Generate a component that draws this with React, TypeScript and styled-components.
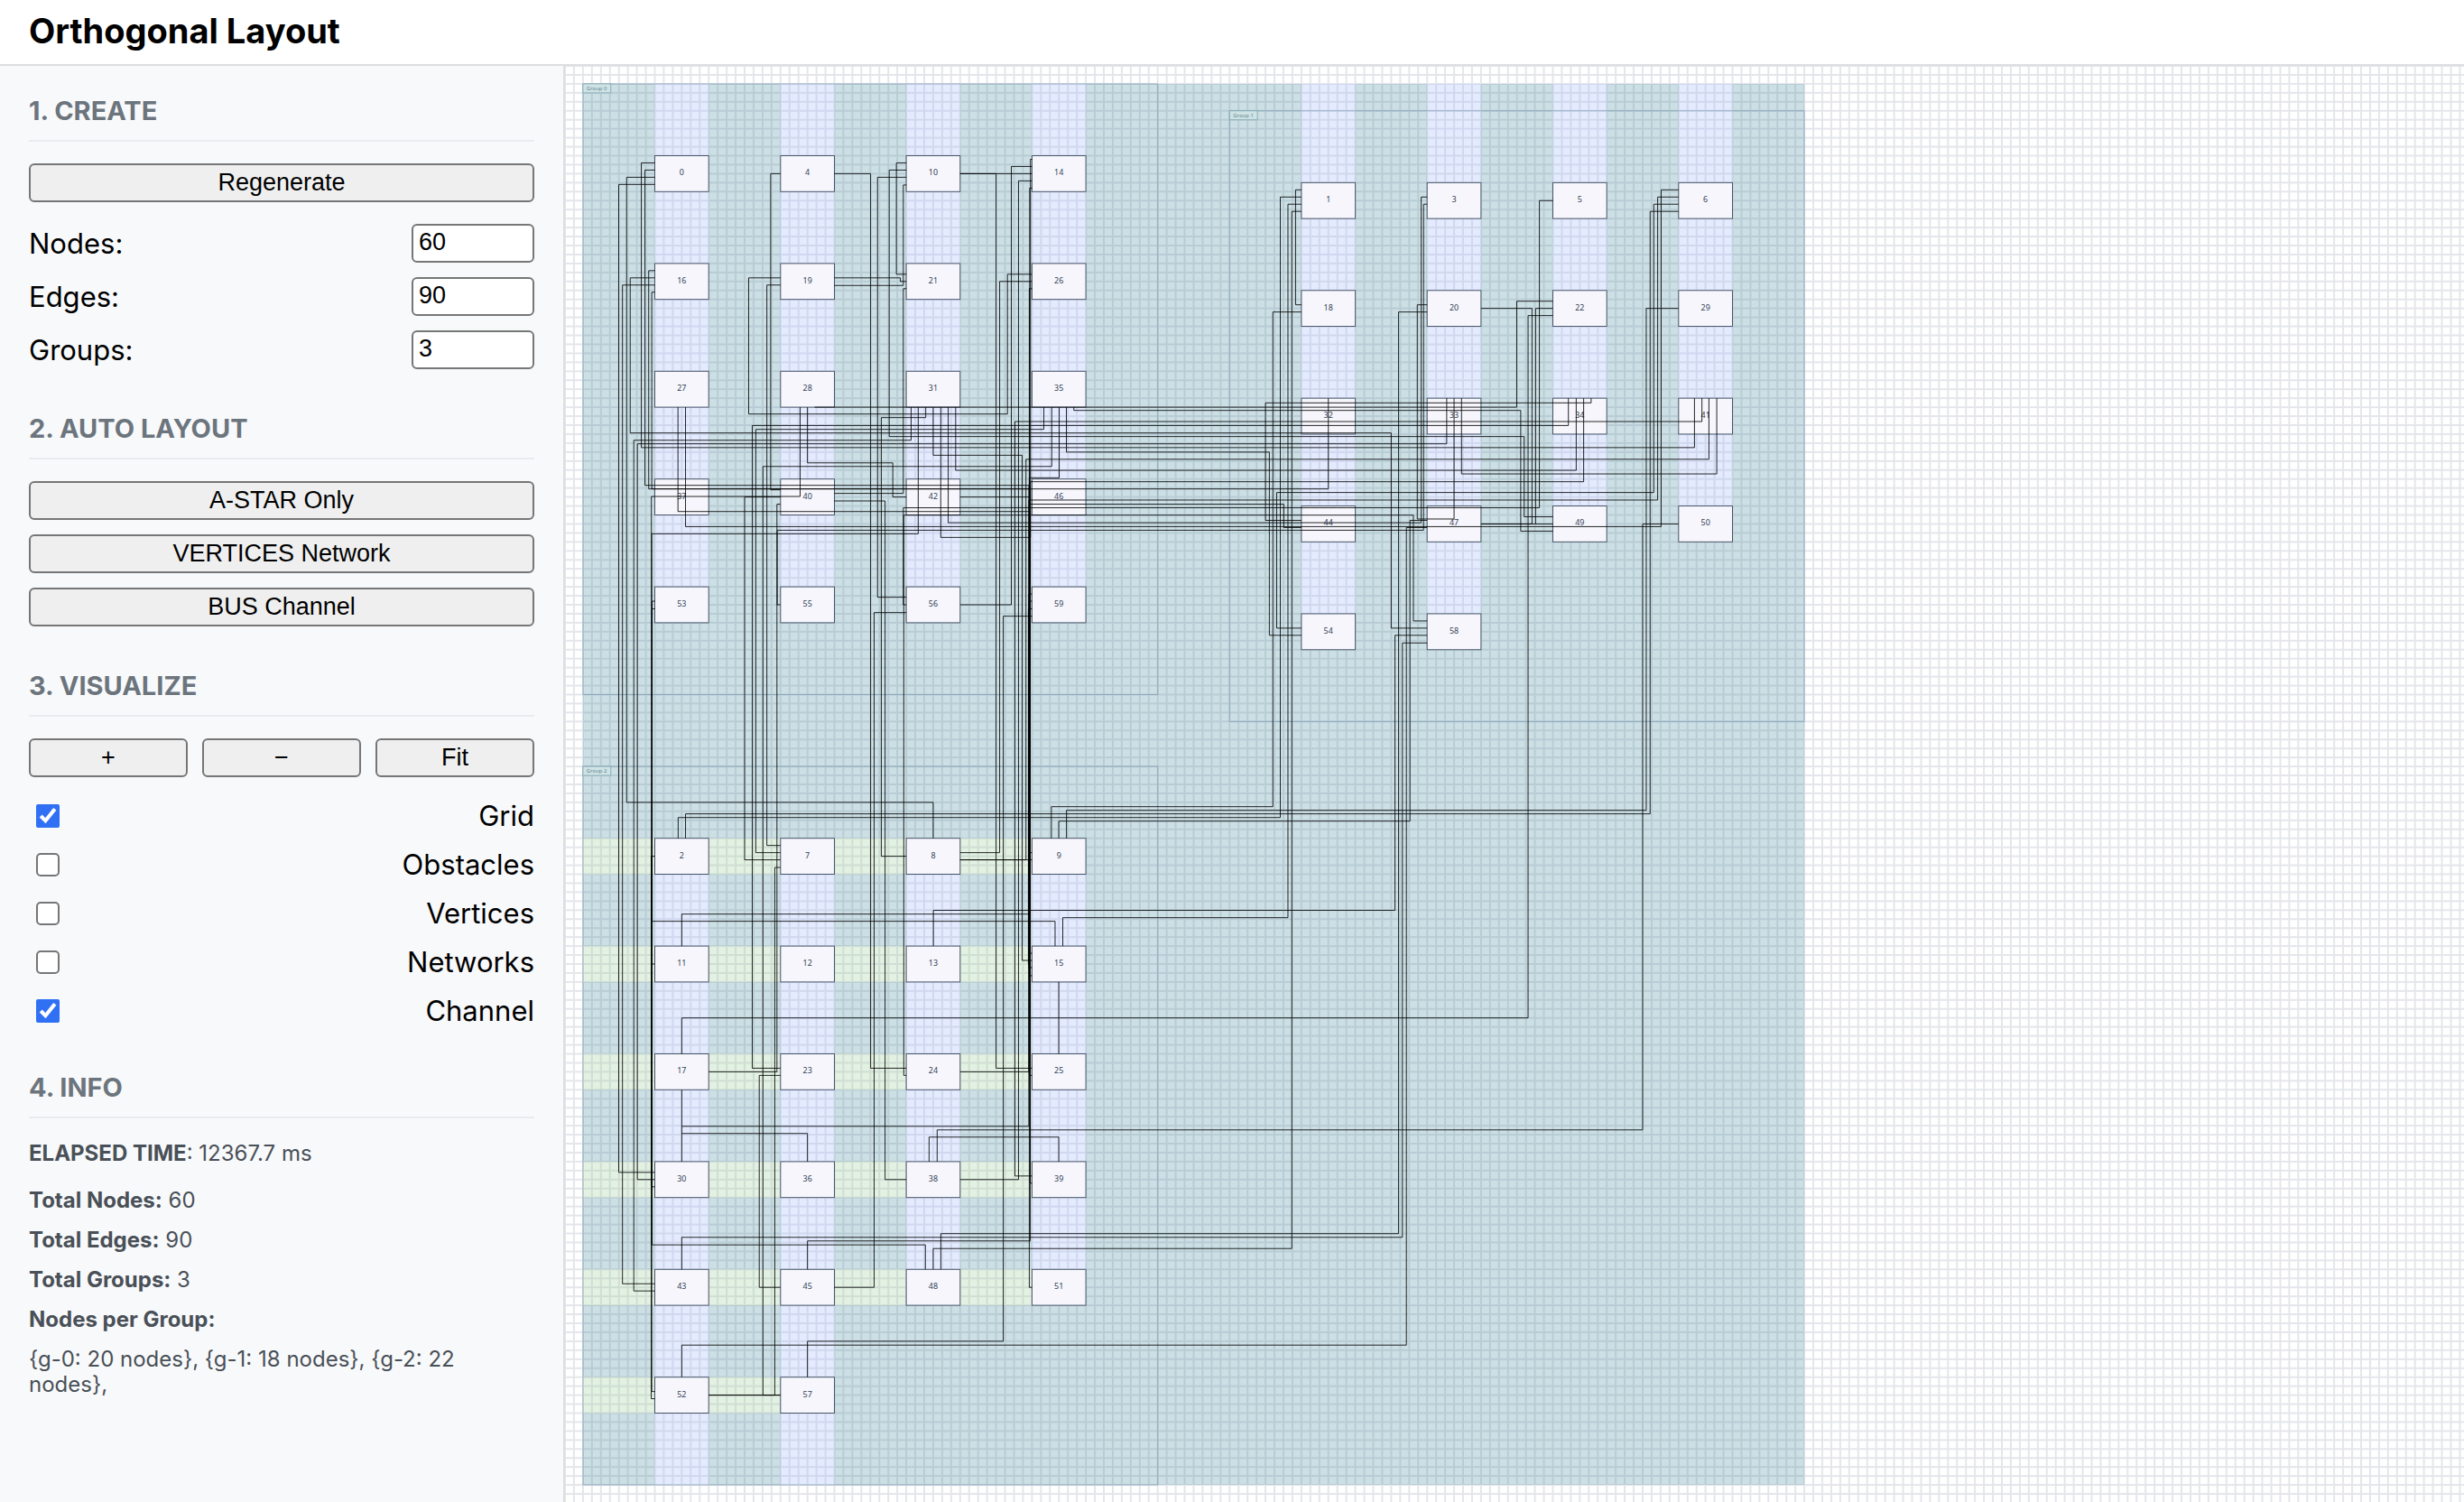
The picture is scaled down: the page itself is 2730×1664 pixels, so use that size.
import React, { useState } from "react";
import styled, { createGlobalStyle } from "styled-components";

const GlobalStyle = createGlobalStyle`
  * { box-sizing: border-box; }
  body { margin: 0; background: #fff; color: #000; font-family: Inter, "Liberation Sans", sans-serif; }
`;

const Page = styled.div`
  display: flex;
  flex-direction: column;
  height: 100vh;
`;

const Header = styled.header`
  flex: none;
  display: flex;
  align-items: center;
  height: 73px;
  padding: 0 32px 4px;
  border-bottom: 2px solid #dcdee0;
`;

const Title = styled.h1`
  margin: 0;
  font-size: 38px;
  line-height: 44px;
  font-weight: 700;
`;

const Body = styled.div`
  flex: 1;
  min-height: 0;
  display: flex;
`;

const Sidebar = styled.aside`
  flex: none;
  display: flex;
  flex-direction: column;
  gap: 47px;
  width: 626px;
  padding: 31px 32px;
  overflow: hidden;
  background: #f8f9fb;
  border-right: 2px solid #dcdee0;
`;

const Section = styled.section`
  display: flex;
  flex-direction: column;
  gap: 24px;
`;

const Heading = styled.h2`
  margin: 0;
  padding-bottom: 13px;
  border-bottom: 2px solid #e9ecef;
  color: #6c757d;
  font-size: 29px;
  line-height: 38px;
  font-weight: 700;
`;

const Stack = styled.div`
  display: flex;
  flex-direction: column;
  gap: 16px;
`;

const ButtonRow = styled.div`
  display: grid;
  grid-template-columns: repeat(3, 1fr);
  gap: 16px;
`;

const Button = styled.button`
  height: 43px;
  padding: 0 12px 2px;
  border: 2px solid #767676;
  border-radius: 6px;
  background: #efefef;
  color: #000;
  font: 27px/32px "Liberation Sans", Arial, sans-serif;
`;

const Field = styled.div`
  display: flex;
  align-items: center;
  justify-content: space-between;
  height: ${(p: { $tall?: boolean }) => (p.$tall ? "43px" : "38px")};
  font-size: 31px;
  line-height: 40px;
`;

const NumberInput = styled.input`
  width: 136px;
  height: 43px;
  padding: 0 6px 2px;
  border: 2px solid #767676;
  border-radius: 6px;
  background: #fff;
  color: #000;
  font: 27px/32px "Liberation Sans", Arial, sans-serif;
`;

const Checkbox = styled.input`
  width: 26px;
  height: 26px;
  margin: 0 8px;
  accent-color: #3070f5;

  &:not(:checked) {
    appearance: none;
    border: 2px solid #767676;
    border-radius: 5px;
    background: #fff;
  }
`;

const Info = styled.div`
  display: flex;
  flex-direction: column;
  gap: 24px;
  padding-top: 1px;
  color: #495057;
  font-size: 24px;
  line-height: 28px;
`;

const Line = styled.p`
  margin: 0;
`;

const Canvas = styled.main`
  flex: 1;
  min-width: 0;
  overflow: hidden;
`;

const Diagram = styled.svg`
  display: block;
  width: 100%;
  height: 100%;
  font-family: "Noto Sans", "Open Sans", sans-serif;
`;

const Wire = styled.polyline`
  fill: none;
  stroke: #000;
  stroke-opacity: 0.85;
  stroke-width: 1;
`;

const NodeBox = styled.rect`
  fill: #f6f6fc;
  stroke: #475569;
  stroke-width: 1;
`;

const NodeLabel = styled.text`
  fill: #334155;
  font-size: 9px;
  text-anchor: middle;
`;

const GroupFrame = styled.rect`
  fill: none;
  stroke: #7393ab;
  stroke-opacity: 0.6;
`;

const GroupTag = styled.rect`
  fill: #cfe3e5;
  stroke: #7ba3ae;
  stroke-opacity: 0.8;
`;

const GroupLabel = styled.text`
  fill: #5f8791;
  font-size: 6px;
`;

const WORLD_W = 1360;
const WORLD_H = 1560;
const NODE_W = 60;
const NODE_H = 40;

const groups = [
  { x: 0, y: 0, w: 640, h: 680, ids: [[0, 4, 10, 14], [16, 19, 21, 26], [27, 28, 31, 35], [37, 40, 42, 46], [53, 55, 56, 59]] },
  { x: 720, y: 30, w: 640, h: 680, ids: [[1, 3, 5, 6], [18, 20, 22, 29], [32, 33, 34, 41], [44, 47, 49, 50], [54, 58]] },
  { x: 0, y: 760, w: 640, h: 800, ids: [[2, 7, 8, 9], [11, 12, 13, 15], [17, 23, 24, 25], [30, 36, 38, 39], [43, 45, 48, 51], [52, 57]] },
];

type Box = [number, number, number, number];

const columnChannels: Box[] = [
  [80, 0, 60, 600], [220, 0, 60, 600], [360, 0, 60, 600], [500, 0, 60, 600],
  [800, 0, 60, 630], [940, 0, 60, 630], [1080, 0, 60, 510], [1220, 0, 60, 510],
  [80, 840, 60, 720], [220, 840, 60, 720], [360, 840, 60, 520], [500, 840, 60, 520],
];

const rowChannels: Box[] = [];
[840, 960, 1080, 1200, 1320].forEach((y) => {
  [[0, 80], [140, 80], [280, 80], [420, 80]].forEach(([x, w]) => rowChannels.push([x, y, w, 40]));
});
rowChannels.push([0, 1440, 80, 40], [140, 1440, 80, 40]);

const boxPath = ([x, y, w, h]: Box) => `M${x} ${y}h${w}v${h}h${-w}z`;
const openSpace = [[0, 0, WORLD_W, WORLD_H] as Box, ...columnChannels, ...rowChannels].map(boxPath).join("");

const wires = [
  "80,88 65,88 65,405 1237.7,405 1237.7,350",
  "80,96 69,96 69,447 496.6,447 496.6,984 500,984",
  "80,104 48.6,104 48.6,800 390,800 390,840",
  "80,112 39.8,112 39.8,1212 80,1212",
  "80,208 73.2,208 73.2,451 830,451 830,350",
  "80,216 52.6,216 52.6,388.7 900,388.7 900,606 940,606",
  "80,224 44,224 44,1336 80,1336",
  "80,232 76.6,232 76.6,451 497,451 497,993 500,993",
  "365.4,360 365.4,396.8 56.6,396.8 56.6,1344 80,1344",
  "961.8,350 961.8,400.8 60.6,400.8 60.6,1220 80,1220",
  "241.8,360 241.8,459.4 76.2,459.4 76.2,1228 80,1228",
  "373.3,360 373.3,501 76.6,501 76.6,1456 80,1456",
  "80,576 77,576 77,932.4 525.7,932.4 525.7,960",
  "80,584.5 77,584.5 77,1292.7 381.3,1292.7 381.3,1320",
  "80,860 76,860 76,1464 80,1464",
  "80,980 76,980",
  "105.8,360 105.8,476.2 498,476.2 498,1224 500,1224",
  "114.2,360 114.2,493 1200.6,493 1200.6,118 1220,118",
  "250,360 250,422 345,422 345,460 360,460",
  "258,360 1039.8,360 1039.8,242 1080,242",
  "381.7,360 381.7,371.6 332.2,371.6 332.2,860 360,860",
  "390,360 390,413.5 489,413.5 489,976 500,976",
  "398.4,360 398.4,505 498.3,505 498.3,84 500,84",
  "406.7,360 406.7,488.6 933.4,488.6 933.4,126 940,126",
  "415,360 415,430.3 1106,430.3 1106,350",
  "513.2,360 513.2,384.7 192.5,384.7 192.5,856 220,856",
  "522,360 522,426 200.4,426 200.4,1460 220,1460",
  "530.3,360 530.3,438.6 497,438.6 497,1340 500,1340",
  "538.3,360 538.3,410 764.3,410 764.3,614 800,614",
  "546.6,360 546.6,363.6 1044.2,363.6 1044.2,498 1080,498",
  "1097.3,350 1097.3,380.4 188.5,380.4 188.5,1096 220,1096",
  "140,1100 216,1100 216,468 220,468",
  "220,1104 196.3,1104 196.3,1340 220,1340",
  "220,460 180,460 180,864 220,864",
  "220,224 204.8,224 204.8,848 220,848",
  "220,100 209,100 209,452 220,452",
  "220,216 184.5,216 184.5,367.6 472.7,367.6 472.7,212 500,212",
  "220,580 216.3,580 216.3,497 936,497 936,134 940,134",
  "220,872.5 213.6,872.5 213.6,1460 140,1460 220,1460",
  "280,456 356.7,456 356.7,228 360,228",
  "280,464.4 336.4,464.4 336.4,1220 360,1220",
  "360,88 349,88 349,212 360,212",
  "360,96 341,96 341,392.7 1048,392.7 1048,482 1080,482",
  "360,104 328,104 328,571.6 360,571.6",
  "360,112.6 356.7,112.6 356.7,224.5 280,224.5",
  "280,216 353.4,216 353.4,220 360,220",
  "1080,130 1065,130 1065,472 356.7,472 356.7,580 360,580",
  "940,598 924.7,598 924.7,480.2 357.2,480.2 357.2,1104 360,1104",
  "280,100 320.3,100 320.3,1096 360,1096",
  "360,588.7 324.2,588.7 324.2,1340 280,1340",
  "420,460 497.5,460 497.5,1104 500,1104",
  "420,100 500,100",
  "420,100 460,100 460,1096 500,1096",
  "500,92 477,92 477,580 420,580",
  "500,108 485,108 485,1220 420,1220",
  "500,116 497.4,116 497.4,968 500,968",
  "500,220 464,220 464,856 420,856",
  "500,228 497,228 497,856 500,856",
  "500,592.7 468,592.7 468,1400 250,1400 250,1440",
  "1246,350 1246,376 481,376 481,1216 500,1216",
  "1253.8,350 1253.8,418 493.3,418 493.3,864 420,864",
  "420,864 500,864",
  "1114.3,350 1114.3,443 498,443 498,1288.3 250,1288.3 250,1320",
  "1220,126 1196.7,126 1196.7,463.4 496.5,463.4 496.5,1160.7 110,1160.7",
  "800,494 780.4,494 780.4,468 497.4,468 497.4,924.4 110,924.4 110,960",
  "420,1100 496.4,1100 496.4,568 500,568",
  "500,576 498,576",
  "500,584.5 496,584.5 496,980",
  "110,1120 110,1200",
  "110,1168.7 250,1168.7 250,1200",
  "385.4,1200 385.4,1172.7 529.8,1172.7 529.8,1200",
  "529.8,1000 529.8,1080",
  "1122.6,350 1122.6,355.2 760,355.2 760,486 800,486",
  "800,254 768.2,254 768.2,804.8 521.6,804.8 521.6,840",
  "1220,250 1184,250 1184,808.8 538.4,808.8 538.4,840",
  "1220,142 1188.3,142 1188.3,812.8 114.2,812.8 114.2,840",
  "800,126 776.5,126 776.5,816.9 106,816.9 106,840",
  "940,486 920.9,486 920.9,820.9 529.8,820.9 529.8,840",
  "1220,490 1180,490 1180,1164.7 394.4,1164.7 394.4,1200",
  "1220,134 1192.4,134 1192.4,455 772.5,455 772.5,606 800,606",
  "800,134 785,134 785,928.4 534.3,928.4 534.3,960",
  "800,142 789.3,142 789.3,1296.8 390,1296.8 390,1320",
  "800,118 793.5,118 793.5,246 800,246",
  "940,254 908.2,254 908.2,1280.2 398.5,1280.2 398.5,1320",
  "940,614 904.2,614 904.2,920.2 390.2,920.2 390.2,960",
  "940,622.5 912.5,622.5 912.5,1284.3 110,1284.3 110,1320",
  "940,494 916.9,494 916.9,1404.3 110,1404.3 110,1440",
  "940,246 929,246 929,484.5 970,484.5 970,350",
  "978.3,350 978.3,434.3 1262.5,434.3 1262.5,350",
  "1000,250 1056.8,250 1056.8,490 1000,490",
  "1080,250 1060.8,250 1060.8,490",
  "1080,258 1052.4,258 1052.4,1040 110,1040 110,1080",
  "1000,490 1080,490",
];

const layers = ["Grid", "Obstacles", "Vertices", "Networks", "Channel"];

export default function App() {
  const [counts, setCounts] = useState<Record<string, number>>({ Nodes: 60, Edges: 90, Groups: 3 });
  const [shown, setShown] = useState<Record<string, boolean>>({ Grid: true, Channel: true });

  return (
    <Page>
      <GlobalStyle />
      <Header>
        <Title>Orthogonal Layout</Title>
      </Header>
      <Body>
        <Sidebar>
          <Section>
            <Heading>1. CREATE</Heading>
            <Button>Regenerate</Button>
            <Stack>
              {Object.keys(counts).map((name) => (
                <Field key={name} $tall>
                  <label htmlFor={name}>{name}:</label>
                  <NumberInput
                    id={name}
                    inputMode="numeric"
                    value={counts[name]}
                    onChange={(e) => setCounts({ ...counts, [name]: Number(e.target.value) })}
                  />
                </Field>
              ))}
            </Stack>
          </Section>
          <Section>
            <Heading>2. AUTO LAYOUT</Heading>
            <Stack>
              <Button>A-STAR Only</Button>
              <Button>VERTICES Network</Button>
              <Button>BUS Channel</Button>
            </Stack>
          </Section>
          <Section>
            <Heading>3. VISUALIZE</Heading>
            <ButtonRow>
              <Button>+</Button>
              <Button>−</Button>
              <Button>Fit</Button>
            </ButtonRow>
            <Stack>
              {layers.map((name) => (
                <Field key={name}>
                  <Checkbox
                    type="checkbox"
                    id={name}
                    checked={!!shown[name]}
                    onChange={(e) => setShown({ ...shown, [name]: e.target.checked })}
                  />
                  <label htmlFor={name}>{name}</label>
                </Field>
              ))}
            </Stack>
          </Section>
          <Section>
            <Heading>4. INFO</Heading>
            <Info>
              <Line><strong>ELAPSED TIME</strong>: 12367.7 ms</Line>
              <Stack>
                <Line><strong>Total Nodes:</strong> 60</Line>
                <Line><strong>Total Edges:</strong> 90</Line>
                <Line><strong>Total Groups:</strong> 3</Line>
                <Line><strong>Nodes per Group:</strong></Line>
                <Line>{"{g-0: 20 nodes}, {g-1: 18 nodes}, {g-2: 22 nodes},"}</Line>
              </Stack>
            </Info>
          </Section>
        </Sidebar>
        <Canvas>
          <Diagram viewBox="-20 -20 1400 1599" preserveAspectRatio="xMinYMin meet">
            <defs>
              <pattern id="grid" x="-5" y="-5" width="10" height="10" patternUnits="userSpaceOnUse">
                <path d="M5 0V10M0 5H10" stroke="#e4e6eb" strokeWidth="2" />
              </pattern>
            </defs>
            {shown.Grid && <rect x="-40" y="-40" width="4000" height="2400" fill="url(#grid)" />}
            {shown.Channel && (
              <g fillOpacity="0.25">
                <path d={openSpace} fill="#358094" fillRule="evenodd" />
                <path d={columnChannels.map(boxPath).join("")} fill="#93affb" />
                <path d={rowChannels.map(boxPath).join("")} fill="#8fc78b" />
              </g>
            )}
            {groups.map((g, i) => (
              <g key={i}>
                <GroupFrame x={g.x} y={g.y} width={g.w} height={g.h} />
                <GroupTag x={g.x} y={g.y} width={31} height={10} />
                <GroupLabel x={g.x + 4} y={g.y + 7}>Group {i}</GroupLabel>
              </g>
            ))}
            {groups.flatMap((g) =>
              g.ids.flatMap((row, r) =>
                row.map((id, c) => {
                  const x = g.x + 80 + c * 140;
                  const y = g.y + 80 + r * 120;
                  return (
                    <g key={id}>
                      <NodeBox x={x} y={y} width={NODE_W} height={NODE_H} />
                      <NodeLabel x={x + NODE_W / 2} y={y + 22}>{id}</NodeLabel>
                    </g>
                  );
                })
              )
            )}
            {wires.map((points, i) => (
              <Wire key={i} points={points} />
            ))}
          </Diagram>
        </Canvas>
      </Body>
    </Page>
  );
}
